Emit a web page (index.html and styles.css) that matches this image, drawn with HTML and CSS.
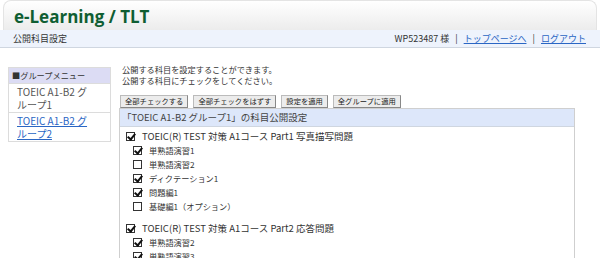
FILE: index.html
```html
<!DOCTYPE html>
<html lang="ja">
<head>
  <meta charset="UTF-8" />
  <title>公開科目設定</title>
  <link rel="stylesheet" href="styles.css">
</head>
<body>

  <div class="header">
    <h1>e-Learning / TLT</h1>
  </div>
  <div class="subbar">
    <span>公開科目設定</span>
    <span class="user">WP523487 様 <i>|</i> <a href="#">トップページへ</a> <i>|</i> <a href="#">ログアウト</a></span>
  </div>

  <div class="page">
    <div class="side">
      <div class="side-head">■グループメニュー</div>
      <div class="side-item">TOEIC A1-B2 グループ1</div>
      <div class="side-item"><a href="#">TOEIC A1-B2 グループ2</a></div>
    </div>

    <div class="main">
      <p class="intro">公開する科目を設定することができます。<br>公開する科目にチェックをしてください。</p>
      <div class="buttons">
        <button>全部チェックする</button>
        <button>全部チェックをはずす</button>
        <button>設定を適用</button>
        <button>全グループに適用</button>
      </div>
      <div class="panel">
        <div class="panel-head">「TOEIC A1-B2 グループ1」の科目公開設定</div>
        <ul class="courses">
          <li>
            <div class="course"><span class="box on"></span>TOEIC(R) TEST 対策 A1コース Part1 写真描写問題</div>
            <div class="unit"><span class="box on"></span>単熟語演習1</div>
            <div class="unit"><span class="box"></span>単熟語演習2</div>
            <div class="unit"><span class="box on"></span>ディクテーション1</div>
            <div class="unit"><span class="box on"></span>問題編1</div>
            <div class="unit"><span class="box"></span>基礎編1（オプション）</div>
          </li>
          <li>
            <div class="course"><span class="box on"></span>TOEIC(R) TEST 対策 A1コース Part2 応答問題</div>
            <div class="unit"><span class="box on"></span>単熟語演習2</div>
            <div class="unit"><span class="box on"></span>単熟語演習3</div>
            <div class="unit"><span class="box on"></span>ディクテーション2</div>
          </li>
        </ul>
      </div>
    </div>
  </div>

</body>
</html>
```

FILE: styles.css
```css
body {
  margin: 0;
  font-family: "Noto Sans CJK JP", "Noto Sans", sans-serif;
  font-size: 8.2px;
  color: #333;
  background: #fff;
}

a {
  color: #2a66c4;
}

.header {
  margin: 0 3px;
  height: 30px;
  border: 1px solid #e4e4e4;
  border-bottom: none;
  border-radius: 8px 8px 0 0;
  background: linear-gradient(#ffffff, #ececec);
  box-sizing: border-box;
}

.header h1 {
  margin: 0;
  padding: 5px 0 0 10px;
  font-family: "Open Sans", sans-serif;
  font-size: 17px;
  line-height: 22px;
  color: #0f5e32;
}

.subbar {
  display: flex;
  justify-content: space-between;
  align-items: center;
  height: 17px;
  padding: 0 14px 0 13px;
  background: #eef3fc;
  border-bottom: 1px solid #cfd6e0;
  font-size: 9px;
}

.user i {
  font-style: normal;
  margin: 0 4px;
}

.page {
  display: flex;
  align-items: flex-start;
  gap: 8px;
  padding: 16px 25px 0 8px;
}

.side {
  width: 101px;
  margin-top: 3px;
  border: 1px solid #dcdcdc;
}

.side-head {
  background: #dcdcf4;
  padding: 3px 3px;
  line-height: 9px;
}

.side-item {
  padding: 1px 21px 1px 8px;
  border-top: 1px solid #dcdcdc;
  line-height: 13px;
  font-size: 10px;
  color: #555;
}

.main {
  flex: 1;
}

.intro {
  margin: 0 0 9px 3px;
  line-height: 11px;
}

.buttons {
  display: flex;
  gap: 5px;
  margin-left: 1px;
}

.buttons button {
  font-family: inherit;
  font-size: 7.3px;
  height: 13px;
  padding: 0 4px;
  line-height: 11px;
  background: #ececec;
  border: 1px solid #bbb;
  border-right-color: #888;
  border-bottom-color: #888;
  color: #222;
}

.panel {
  border: 1px solid #cfcfcf;
  border-bottom: none;
}

.panel-head {
  background: #dde7fa;
  padding: 3px 2px;
  line-height: 11px;
  color: #444;
  border-bottom: 1px solid #cfd6e0;
  font-size: 9.5px;
}

.courses {
  list-style: none;
  margin: 0;
  padding: 2px 6px;
}

.courses li {
  margin-bottom: 8px;
}

.course,
.unit {
  display: flex;
  align-items: center;
  height: 14px;
}

.course {
  font-size: 9.5px;
}

.unit {
  padding-left: 7px;
}

.box {
  position: relative;
  width: 7px;
  height: 7px;
  border: 1px solid #333;
  margin-right: 7px;
}

.box.on::after {
  content: "";
  position: absolute;
  left: 2px;
  top: -1px;
  width: 3px;
  height: 6px;
  border: solid #111;
  border-width: 0 2px 2px 0;
  transform: rotate(40deg);
}
```
